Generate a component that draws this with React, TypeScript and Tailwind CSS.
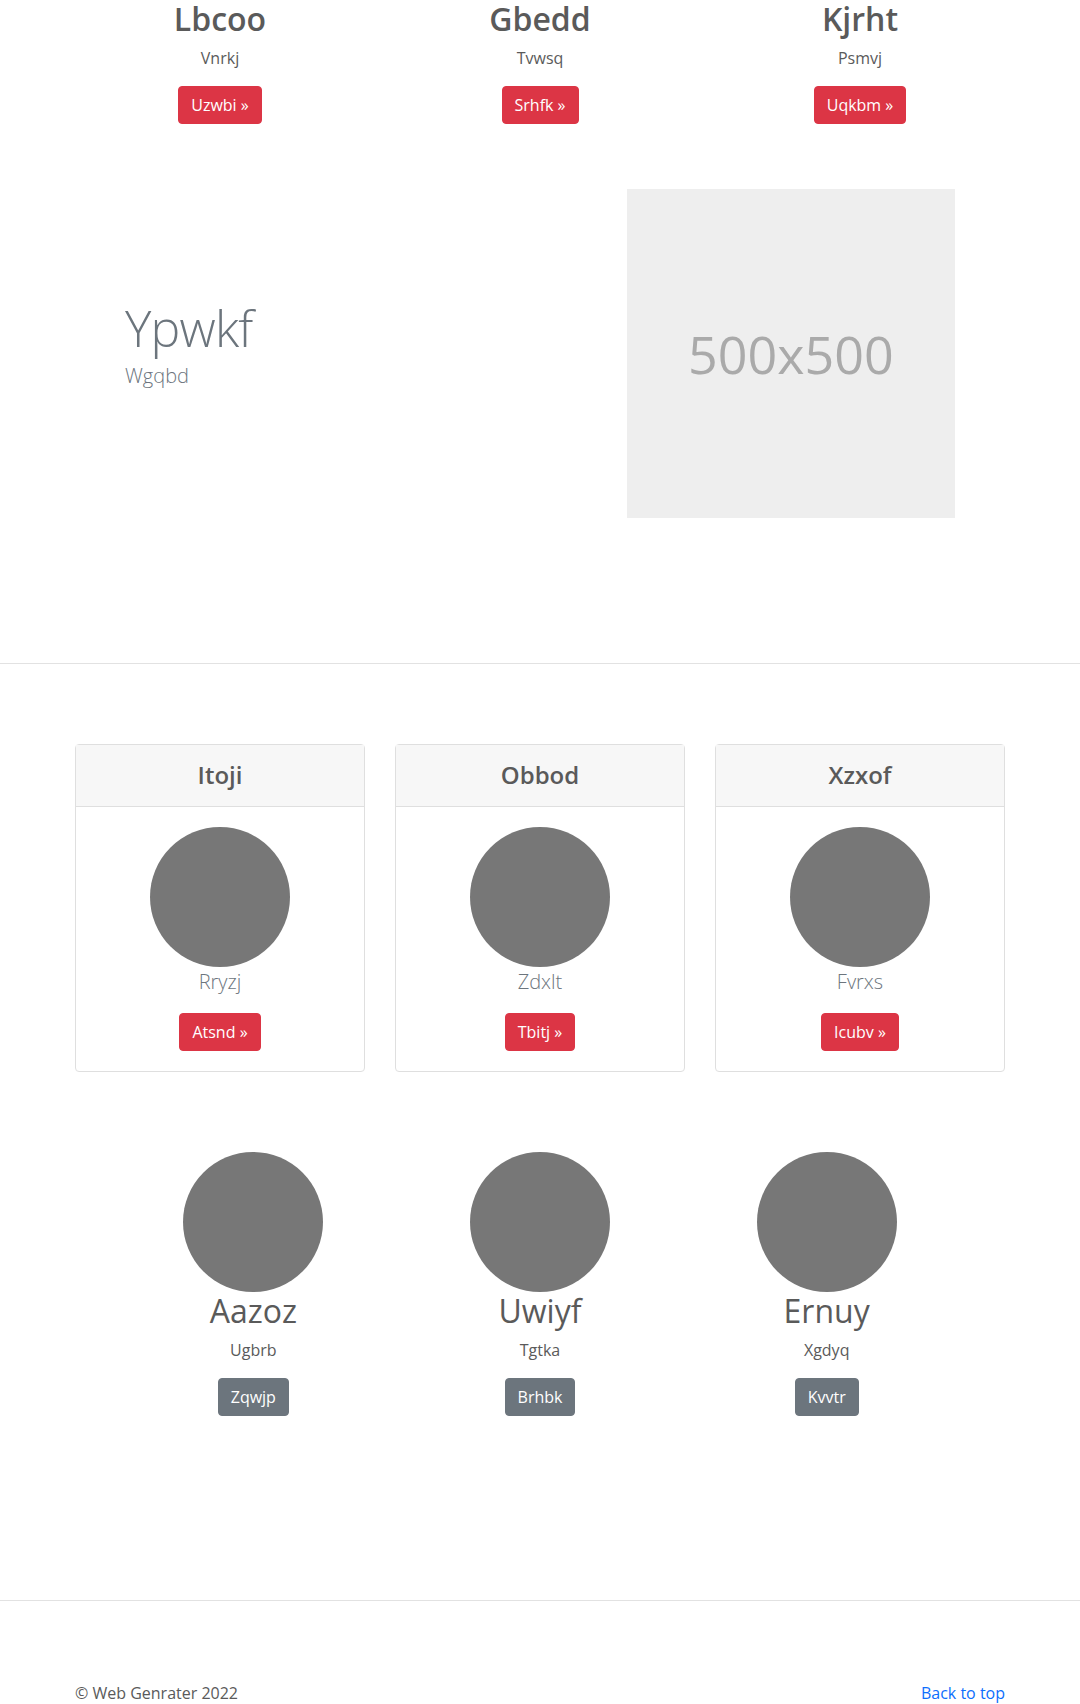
import React from "react";

const font = { fontFamily: '"Open Sans", "Noto Sans", Arial, sans-serif' };

const topCols = [
  { title: "Lbcoo", text: "Vnrkj", cta: "Uzwbi »" },
  { title: "Gbedd", text: "Tvwsq", cta: "Srhfk »" },
  { title: "Kjrht", text: "Psmvj", cta: "Uqkbm »" },
];

const cards = [
  { title: "Itoji", text: "Rryzj", cta: "Atsnd »" },
  { title: "Obbod", text: "Zdxlt", cta: "Tbitj »" },
  { title: "Xzxof", text: "Fvrxs", cta: "Icubv »" },
];

const people = [
  { title: "Aazoz", text: "Ugbrb", cta: "Zqwjp" },
  { title: "Uwiyf", text: "Tgtka", cta: "Brhbk" },
  { title: "Ernuy", text: "Xgdyq", cta: "Kvvtr" },
];

const Circle = () => <div className="mx-auto h-[140px] w-[140px] rounded-full bg-[#777777]" />;

const RedButton = ({ label }: { label: string }) => (
  <button className="rounded-[4px] border border-[#dc3545] bg-[#dc3545] px-3 py-1.5 text-base leading-6 text-white">
    {label}
  </button>
);

export default function App() {
  return (
    <div className="min-h-[1704px] w-full overflow-hidden bg-white text-[#5a5a5a]" style={font}>
      {/* marketing row */}
      <div className="mx-auto grid w-[960px] grid-cols-3">
        {topCols.map((c) => (
          <div key={c.title} className="px-[15px] text-center">
            <h2 className="mb-2 text-[32px] font-semibold leading-[1.2]">{c.title}</h2>
            <p className="mb-4 text-base leading-6">{c.text}</p>
            <RedButton label={c.cta} />
          </div>
        ))}
      </div>

      {/* featurette */}
      <div className="mx-auto mt-[65px] flex w-[860px]">
        <div className="w-7/12 px-[15px]">
          <h2 className="mt-[114px] mb-2 text-[50px] font-light leading-none tracking-[-0.8px] text-[#6c757d]">Ypwkf</h2>
          <p className="text-xl font-light leading-[30px] text-[#6c757d]">Wgqbd</p>
        </div>
        <div className="w-5/12 px-[15px]">
          <div className="flex aspect-square w-full items-center justify-center bg-[#eeeeee]">
            <span className="text-[52px] leading-none text-[#aaaaaa]">500x500</span>
          </div>
        </div>
      </div>

      <hr className="mt-[145px] border-t border-[#e2e2e2]" />

      {/* cards */}
      <div className="mx-auto mt-20 grid w-[960px] grid-cols-3 gap-[30px] px-[15px]">
        {cards.map((c) => (
          <div key={c.title} className="rounded-[4px] border border-[#dfdfdf] text-center">
            <div className="border-b border-[#dfdfdf] bg-[#f7f7f7] py-4">
              <h4 className="text-2xl font-semibold leading-[1.2]">{c.title}</h4>
            </div>
            <div className="p-5">
              <Circle />
              <p className="mb-4 text-xl font-light leading-[30px] text-[#6c757d]">{c.text}</p>
              <RedButton label={c.cta} />
            </div>
          </div>
        ))}
      </div>

      {/* people */}
      <div className="mx-auto mt-20 grid w-[860px] grid-cols-3">
        {people.map((p) => (
          <div key={p.title} className="px-[15px] text-center">
            <Circle />
            <h2 className="mb-2 text-[32px] leading-[1.2]">{p.title}</h2>
            <p className="mb-4 text-base leading-6">{p.text}</p>
            <button className="rounded-[4px] border border-[#6c757d] bg-[#6c757d] px-3 py-1.5 text-base leading-6 text-white">
              {p.cta}
            </button>
          </div>
        ))}
      </div>

      <hr className="mt-[184px] border-t border-[#e2e2e2]" />

      <footer className="mx-auto mt-20 flex w-[960px] justify-between px-[15px] text-base leading-6">
        <p>© Web Genrater 2022</p>
        <a href="#" className="text-[#0d6efd]">Back to top</a>
      </footer>
    </div>
  );
}
